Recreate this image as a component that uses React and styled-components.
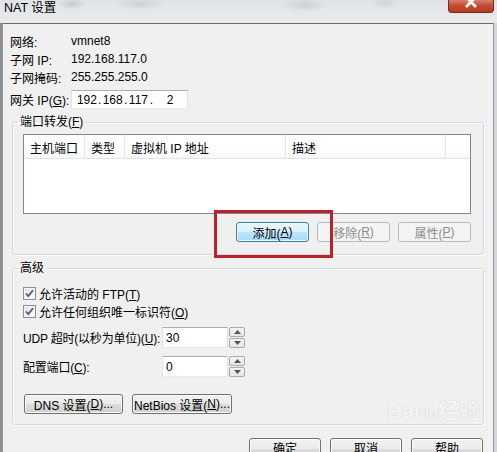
import React from 'react';
import styled, { createGlobalStyle, css } from 'styled-components';

const GlobalStyle = createGlobalStyle`
  html, body {
    margin: 0;
    padding: 0;
    background: #f0f0f0;
  }
  body {
    font-family: "Liberation Sans", "Noto Sans CJK SC", sans-serif;
    font-size: 12px;
    color: #000;
  }
`;

function NatSettings() {
  return (
    <Window>
      <GlobalStyle />
      <TitleBar>
        <Title>NAT 设置</Title>
        <CloseButton>
          <svg width="14" height="10" viewBox="0 0 14 10">
            <path d="M2 -3 L12 7 M12 -3 L2 7" stroke="#fff" strokeWidth="2.6" />
          </svg>
        </CloseButton>
      </TitleBar>

      <Frame>
        <LeftEdge />
        <Body>
          <InfoRows>
            <InfoRow>
              <InfoLabel>网络:</InfoLabel>
              <span>vmnet8</span>
            </InfoRow>
            <InfoRow>
              <InfoLabel>子网 IP:</InfoLabel>
              <span>192.168.117.0</span>
            </InfoRow>
            <InfoRow>
              <InfoLabel>子网掩码:</InfoLabel>
              <span>255.255.255.0</span>
            </InfoRow>
            <InfoRow $gateway>
              <InfoLabel>
                网关 IP(<u>G</u>):
              </InfoLabel>
              <IpBox>
                <IpSegment>192</IpSegment>
                <IpDot>.</IpDot>
                <IpSegment>168</IpSegment>
                <IpDot>.</IpDot>
                <IpSegment>117</IpSegment>
                <IpDot>.</IpDot>
                <IpSegment $wide>2</IpSegment>
              </IpBox>
            </InfoRow>
          </InfoRows>

          <Group>
            <Legend>
              端口转发(<u>F</u>)
            </Legend>
            <GroupBody>
              <ListView>
                <ListHeader>
                  <HeaderCell $w={61}>主机端口</HeaderCell>
                  <HeaderCell $w={40}>类型</HeaderCell>
                  <HeaderCell $w={161}>虚拟机 IP 地址</HeaderCell>
                  <HeaderCell $w={160}>描述</HeaderCell>
                  <HeaderCell $last />
                </ListHeader>
              </ListView>
              <ListButtons>
                <Highlighted>
                  <Button $w={73} $focused>
                    添加(<u>A</u>)
                  </Button>
                  <RedFrame />
                </Highlighted>
                <Button $w={73} disabled>
                  移除(<u>R</u>)
                </Button>
                <Button $w={73} disabled>
                  属性(<u>P</u>)
                </Button>
              </ListButtons>
            </GroupBody>
          </Group>

          <Group>
            <Legend>高级</Legend>
            <GroupBody $bottom={10}>
              <CheckRow>
                <CheckBox />
                <span>
                  允许活动的 FTP(<u>T</u>)
                </span>
              </CheckRow>
              <CheckRow>
                <CheckBox />
                <span>
                  允许任何组织唯一标识符(<u>O</u>)
                </span>
              </CheckRow>
              <SpinRow $top={7}>
                <SpinLabel>
                  UDP 超时(以秒为单位)(<u>U</u>):
                </SpinLabel>
                <SpinField value="30" />
              </SpinRow>
              <SpinRow $top={8}>
                <SpinLabel>
                  配置端口(<u>C</u>):
                </SpinLabel>
                <SpinField value="0" />
              </SpinRow>
              <ExtraButtons>
                <Button $w={99}>
                  DNS 设置(<u>D</u>)...
                </Button>
                <Button $w={100}>
                  NetBios 设置(<u>N</u>)...
                </Button>
              </ExtraButtons>
            </GroupBody>
          </Group>

          <Footer>
            <Button $w={72} $h={22} $footer>确定</Button>
            <Button $w={72} $h={22} $footer>取消</Button>
            <Button $w={72} $h={22} $footer>帮助</Button>
          </Footer>

          <Watermark>
            Bai<Paw>du</Paw>经验
          </Watermark>
        </Body>
      </Frame>
    </Window>
  );
}

function CheckBox() {
  return (
    <CheckBoxBox>
      <svg width="11" height="11" viewBox="0 0 11 11">
        <path
          d="M2 5.5 L4.3 8 L9 2.2"
          fill="none"
          stroke="#4a5a80"
          strokeWidth="1.8"
        />
      </svg>
    </CheckBoxBox>
  );
}

function SpinField({ value }) {
  return (
    <>
      <SpinInput>{value}</SpinInput>
      <Spinner>
        <SpinHalf>
          <svg width="7" height="4" viewBox="0 0 7 4">
            <path d="M0 4 L3.5 0 L7 4 Z" fill="#4d5566" />
          </svg>
        </SpinHalf>
        <SpinHalf>
          <svg width="7" height="4" viewBox="0 0 7 4">
            <path d="M0 0 L7 0 L3.5 4 Z" fill="#4d5566" />
          </svg>
        </SpinHalf>
      </Spinner>
    </>
  );
}

export default function App() {
  return <NatSettings />;
}

const Window = styled.div`
  display: flex;
  flex-direction: column;
  width: 497px;
  height: 452px;
  overflow: hidden;
  background: #d3d7db;
`;

const TitleBar = styled.div`
  display: flex;
  flex-shrink: 0;
  align-items: flex-start;
  height: 23px;
  padding-left: 4px;
  box-sizing: border-box;
  background:
    radial-gradient(ellipse 14px 6px at 72px 4px, rgba(80, 80, 80, 0.18), transparent),
    radial-gradient(ellipse 26px 6px at 140px 4px, rgba(80, 80, 80, 0.14), transparent),
    radial-gradient(ellipse 24px 7px at 305px 5px, rgba(80, 80, 80, 0.14), transparent),
    radial-gradient(ellipse 14px 6px at 385px 3px, rgba(80, 80, 80, 0.12), transparent),
    linear-gradient(#e1e4e7, #e9ebed);
`;

const Title = styled.span`
  line-height: 16px;
  font-size: 12.5px;
`;

const CloseButton = styled.div`
  display: flex;
  justify-content: center;
  align-items: flex-start;
  width: 46px;
  height: 13px;
  margin-left: auto;
  margin-right: 3px;
  box-sizing: border-box;
  border: 1px solid #7a2a20;
  border-top: none;
  border-radius: 0 0 4px 4px;
  background: linear-gradient(#d7826f, #c44c33 45%, #b63a22);
`;

const Frame = styled.div`
  display: flex;
  flex: 1;
  min-height: 0;
`;

const LeftEdge = styled.div`
  width: 2px;
  background: #8a8d90;
`;

const Body = styled.div`
  position: relative;
  flex: 1;
  min-height: 0;
  overflow: hidden;
  margin-right: 3px;
  background: #f0f0f0;
  border-top: 1px solid #6e6e6e;
  border-left: 1px solid #9a9a9a;
  border-right: 1px solid #9a9a9a;
`;

const InfoRows = styled.div`
  display: flex;
  flex-direction: column;
  padding: 8px 0 0 7px;
`;

const InfoRow = styled.div`
  display: flex;
  align-items: center;
  height: 18px;
  ${(p) =>
    p.$gateway &&
    css`
      height: 19px;
      margin-top: 4px;
    `}
`;

const InfoLabel = styled.span`
  width: 61px;
  flex-shrink: 0;
  white-space: nowrap;
`;

const IpBox = styled.div`
  display: flex;
  align-items: center;
  width: 117px;
  height: 19px;
  box-sizing: border-box;
  padding-left: 4px;
  background: #fff;
  border: 1px solid #abadb3;
  border-color: #abadb3 #dbdfe6 #e3e9ef #e2e3ea;
`;

const IpSegment = styled.span`
  width: ${(p) => (p.$wide ? 34 : 22)}px;
  text-align: center;
`;

const IpDot = styled.span`
  width: 4px;
  text-align: center;
`;

const Group = styled.fieldset`
  min-width: 0;
  margin: 5px 9px 0;
  padding: 0;
  border: 1px solid #d5d8dc;
  border-radius: 3px;
  box-shadow: inset 1px 1px 0 #fff, 1px 1px 0 #fff;
`;

const Legend = styled.legend`
  margin-left: 5px;
  padding: 0 2px;
  line-height: 16px;
`;

const GroupBody = styled.div`
  display: flex;
  flex-direction: column;
  padding: 4px 12px ${(p) => p.$bottom ?? 12}px 10px;
`;

const ListView = styled.div`
  height: 80px;
  box-sizing: border-box;
  background: #fff;
  border: 1px solid #828790;
`;

const ListHeader = styled.div`
  display: flex;
  height: 24px;
  box-sizing: border-box;
  background: linear-gradient(#ffffff, #ffffff 60%, #f7f8f9);
  border-bottom: 1px solid #e3e4e6;
`;

const HeaderCell = styled.div`
  display: flex;
  align-items: center;
  box-sizing: border-box;
  width: ${(p) => (p.$w ? `${p.$w}px` : 'auto')};
  flex: ${(p) => (p.$last ? 1 : 'none')};
  padding: 2px 0 0 6px;
  white-space: nowrap;
  border-right: ${(p) => (p.$last ? 'none' : '1px solid #e3e4e6')};
`;

const ListButtons = styled.div`
  display: flex;
  justify-content: flex-end;
  gap: 8px;
  margin-top: 8px;
`;

const Highlighted = styled.div`
  position: relative;
  display: flex;
`;

const RedFrame = styled.span`
  position: absolute;
  left: -22px;
  right: -24px;
  top: -12px;
  bottom: -16px;
  border: 3px solid #b8232a;
  pointer-events: none;
`;

const Button = styled.button`
  display: flex;
  justify-content: center;
  align-items: center;
  flex-shrink: 0;
  width: ${(p) => p.$w}px;
  height: ${(p) => p.$h ?? 20}px;
  padding: 0 0 ${(p) => (p.$footer ? 4 : 0)}px;
  box-sizing: border-box;
  font: inherit;
  color: #000;
  white-space: nowrap;
  border: 1px solid #707070;
  border-radius: 3px;
  background: linear-gradient(#f2f2f2 0%, #ebebeb 50%, #dddddd 50%, #cfcfcf 100%);
  box-shadow: inset 0 0 0 1px #fbfbfb;

  ${(p) =>
    p.$focused &&
    css`
      border-color: #3c7fb1;
      background: linear-gradient(#eaf6fd 0%, #d9f0fc 50%, #bee6fd 50%, #a7d9f5 100%);
      box-shadow: inset 0 0 0 1px #e8f6fd;
    `}

  &:disabled {
    color: #8d8d8d;
    border-color: #b8bcbf;
    background: #f4f4f4;
    box-shadow: none;
  }
`;

const CheckRow = styled.div`
  display: flex;
  align-items: center;
  gap: 3px;
  height: 18px;
  &:first-child {
    margin-top: 4px;
  }
`;

const CheckBoxBox = styled.span`
  display: flex;
  justify-content: center;
  align-items: center;
  width: 13px;
  height: 13px;
  box-sizing: border-box;
  border: 1px solid #8e8f8f;
  background: linear-gradient(135deg, #e0e0e0, #fefefe);
  box-shadow: inset 0 0 0 1px #f4f4f4;
`;

const SpinRow = styled.div`
  display: flex;
  align-items: center;
  height: 21px;
  margin-top: ${(p) => p.$top}px;
`;

const SpinLabel = styled.span`
  width: 139px;
  flex-shrink: 0;
  white-space: nowrap;
  letter-spacing: -0.2px;
`;

const SpinInput = styled.div`
  display: flex;
  align-items: center;
  width: 66px;
  height: 21px;
  box-sizing: border-box;
  padding-left: 3px;
  background: #fff;
  border: 1px solid #abadb3;
  border-color: #abadb3 #dbdfe6 #e3e9ef #e2e3ea;
`;

const Spinner = styled.div`
  display: flex;
  flex-direction: column;
  gap: 1px;
  width: 16px;
  height: 21px;
  margin-left: 1px;
`;

const SpinHalf = styled.div`
  display: flex;
  justify-content: center;
  align-items: center;
  flex: 1;
  box-sizing: border-box;
  border: 1px solid #a9a9a9;
  border-radius: 2px;
  background: linear-gradient(#f5f5f5, #e6e6e6);
`;

const ExtraButtons = styled.div`
  display: flex;
  gap: 9px;
  margin-top: 17px;
  padding-left: 1px;
`;

const Footer = styled.div`
  display: flex;
  justify-content: flex-end;
  gap: 9px;
  margin-top: 13px;
  padding-right: 10px;
`;

const Watermark = styled.div`
  position: absolute;
  left: 384px;
  top: 370px;
  font-family: "Liberation Sans", "Noto Sans CJK SC", sans-serif;
  font-size: 21px;
  font-weight: bold;
  color: rgba(255, 255, 255, 0.85);
  text-shadow: 0 0 1px rgba(0, 0, 0, 0.22);
  pointer-events: none;
`;

const Paw = styled.span`
  font-size: 15px;
`;
